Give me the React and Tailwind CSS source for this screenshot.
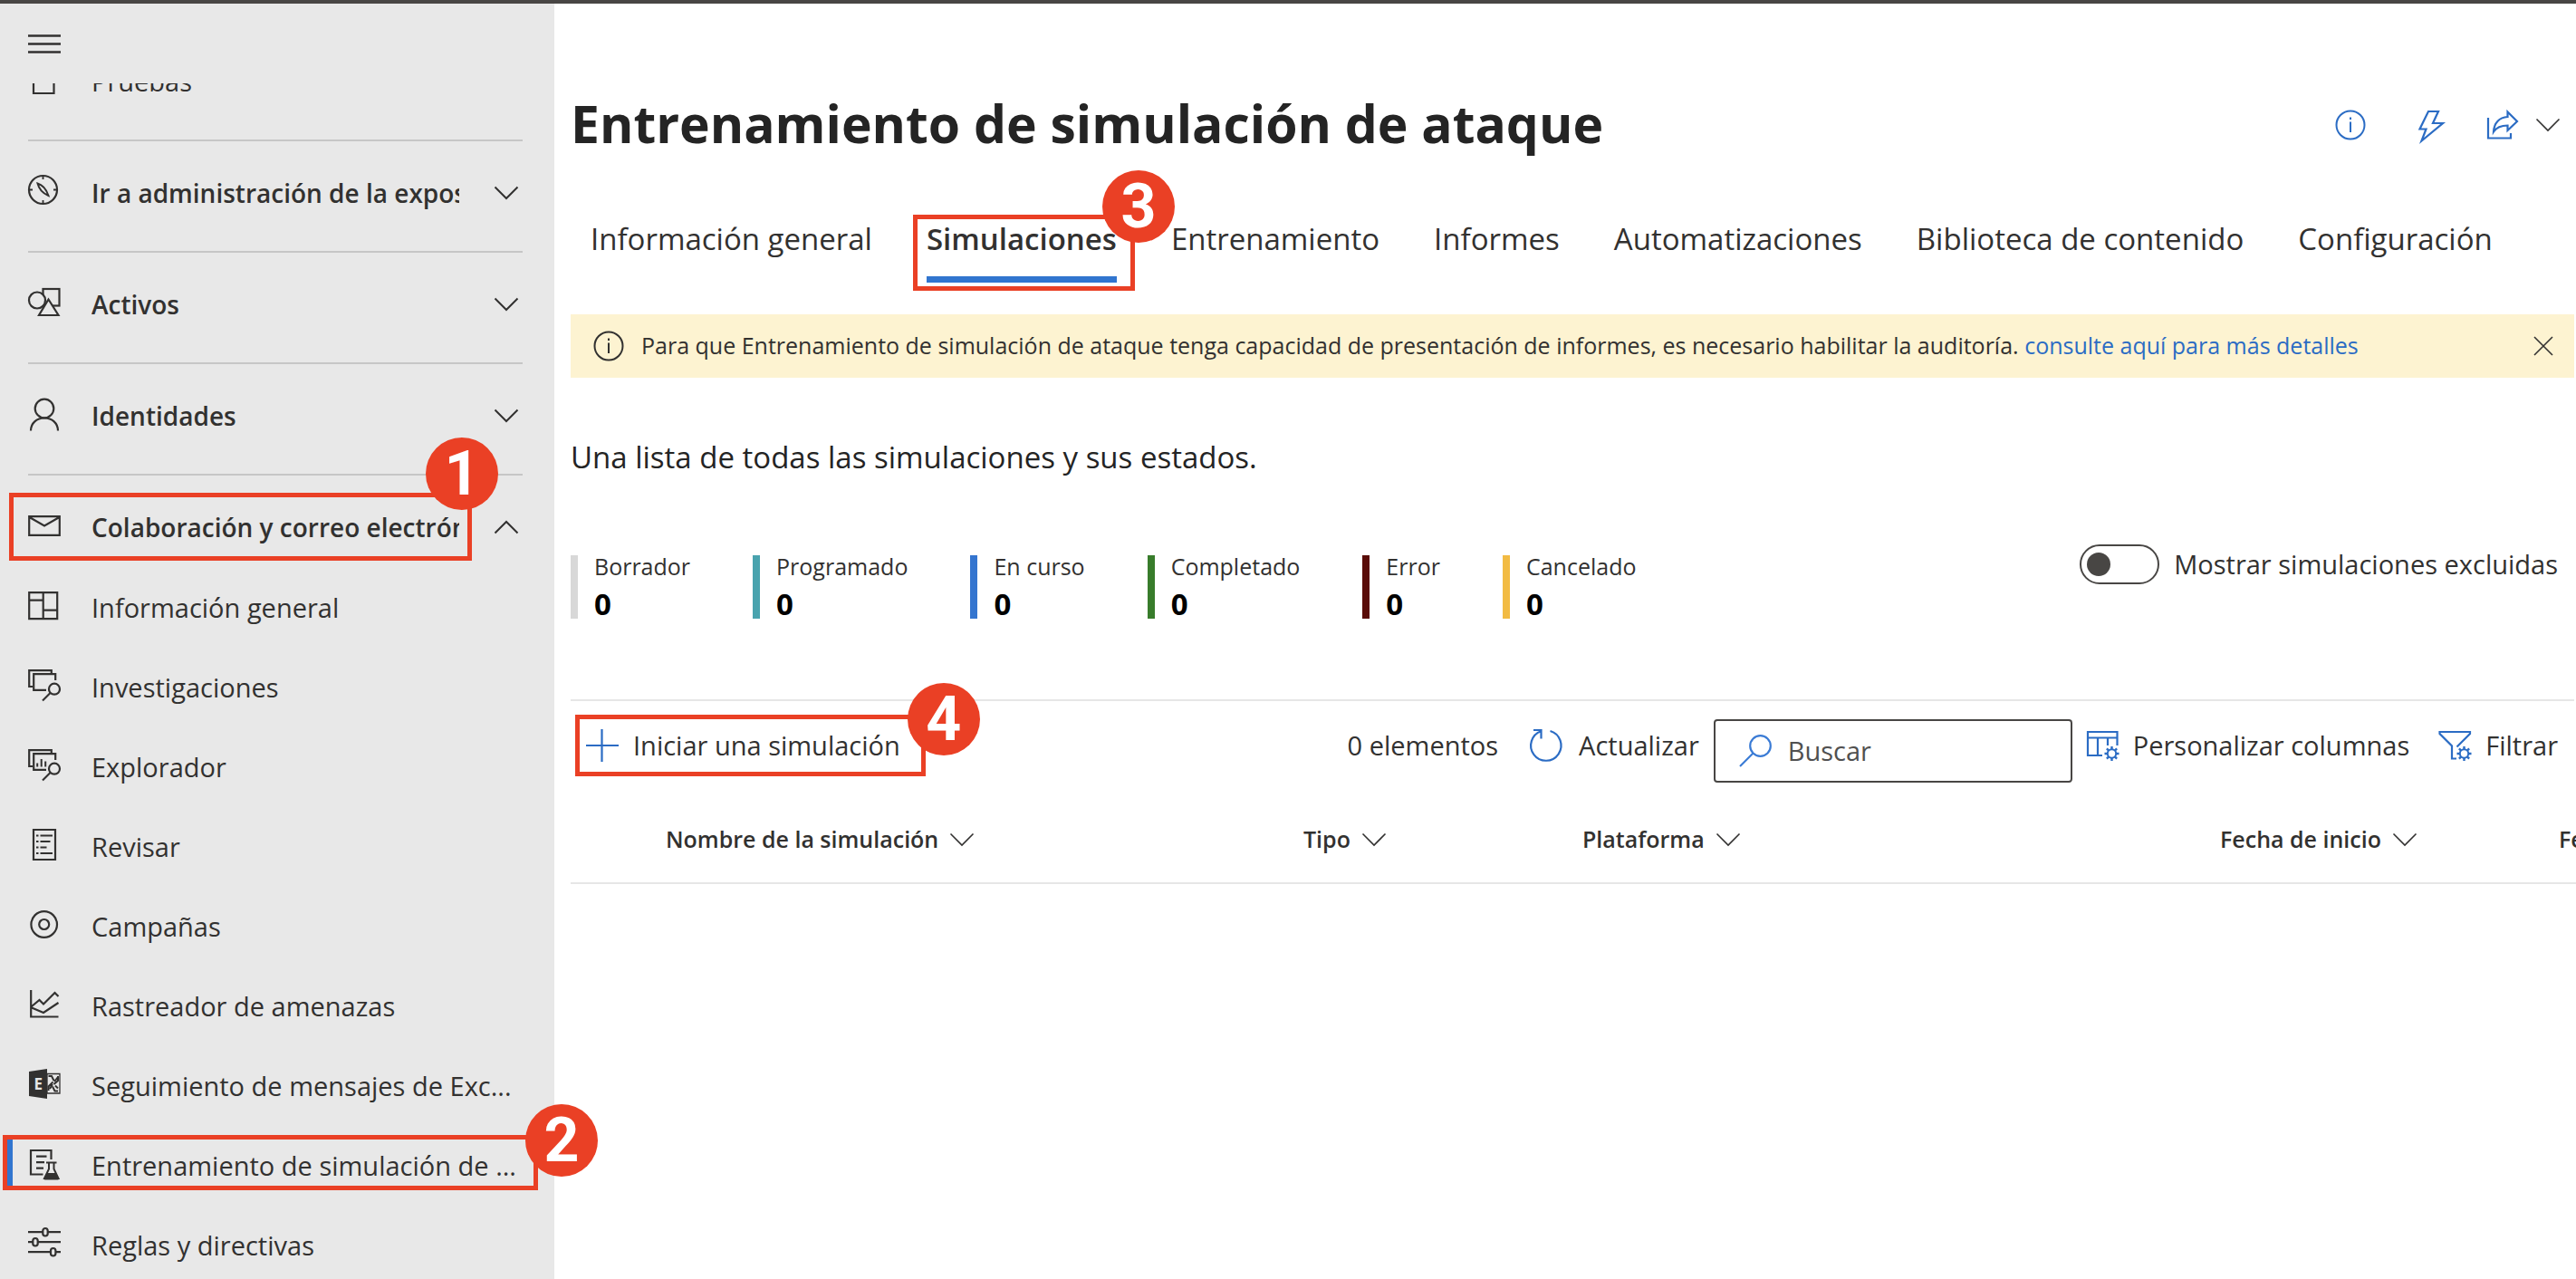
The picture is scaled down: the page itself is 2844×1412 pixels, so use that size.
import React from "react";

function Glyph({ children }) {
  return (
    <svg
      viewBox="0 0 36 40"
      className="h-10 w-9 shrink-0 overflow-visible"
      fill="none"
      stroke="#323130"
      strokeWidth="2.2"
      aria-hidden="true"
    >
      {children}
    </svg>
  );
}

const CaseIcon = () => (
  <Glyph>
    <path d="M12 7V3h10v4M6 7h22.500v26H6z" />
  </Glyph>
);
const CompassIcon = () => (
  <Glyph>
    <circle cx="16.500" cy="16.500" r="15.500" />
    <path d="M16.500 1v4M16.500 28v4M1 16.500h4M28 16.500h4" strokeWidth="1.800" />
    <path d="M10.500 9.500c5 1.500 9.500 6 12 13.500c-6-2.500-10.500-7.500-12-13.500z" strokeWidth="2" />
  </Glyph>
);
const ShapesIcon = () => (
  <Glyph>
    <rect x="16.500" y="3" width="18" height="18.500" />
    <circle cx="10" cy="15.500" r="9" fill="#e8e8e8" />
    <path d="M22.500 14.500L12 32h21.500z" fill="#e8e8e8" />
  </Glyph>
);
const PersonIcon = () => (
  <Glyph>
    <circle cx="18" cy="12" r="10.300" />
    <path d="M3 36.500C3 28 9.500 22.500 18 22.500S33 28 33 36.500" />
  </Glyph>
);
const MailIcon = () => (
  <Glyph>
    <path d="M1.200 8.200h33.600v20.600H1.200zM1.500 9l16.500 9.500L34.500 9" />
  </Glyph>
);
const BoardIcon = () => (
  <Glyph>
    <path d="M1.200 3.200h31v29h-31zM16.700 3v29M1 11.700h15.700M16.700 22.700H32" />
  </Glyph>
);
const StackSearch = ({ children }) => (
  <Glyph>
    <path d="M5 19H1.200V1.200h24.600V5M30.200 12V5.200H6.200v17.600H20" />
    <circle cx="29" cy="21.700" r="6" />
    <path d="M24.500 26L16 34.500" />
    {children}
  </Glyph>
);
const InvestigationsIcon = () => <StackSearch />;
const ExplorerIcon = () => (
  <StackSearch>
    <path d="M10.200 19.500v-4M14.700 19.500V11M19.200 19.500v-6" strokeWidth="2" />
  </StackSearch>
);
const ReviewIcon = () => (
  <Glyph>
    <path d="M6 1h24v33H6z" />
    <path
      d="M9 7.500h2.500M13.500 7.500h13.500M9 14h2.500M13.500 14h11M9 20.500h2.500M13.500 20.500h7M9 27h2.500M13.500 27h13.500"
      strokeWidth="1.900"
    />
  </Glyph>
);
const TargetIcon = () => (
  <Glyph>
    <circle cx="17.700" cy="17.500" r="14.300" />
    <circle cx="17.700" cy="17.500" r="5.500" />
  </Glyph>
);
const TrendIcon = () => (
  <Glyph>
    <path d="M3.200 2v29.500H33.500M4 20l8.500-7 4.500 4.500L29.500 5l4 4M4 21.500L17 27l16.500-11" />
  </Glyph>
);
const ExchangeIcon = () => (
  <Glyph>
    <path d="M21 6.500h14v21.500H21z" strokeWidth="1.300" />
    <path
      d="M22.500 9h3.500l2.500 5M33 9v5l-4.500 4M33 25.500h-3.500l-2.500-5M22.500 25v-4.500l5-5M29 15l4-5M30 19.500l3 3M27 18l-3 5"
      strokeWidth="2"
    />
    <path d="M1 4l20-3v33L1 31z" fill="#323130" stroke="none" />
    <text
      x="6.500"
      y="23.500"
      fontSize="17"
      fontWeight="700"
      fill="#e8e8e8"
      stroke="none"
      fontFamily="Open Sans, sans-serif"
    >
      E
    </text>
  </Glyph>
);
const TrainingIcon = () => (
  <Glyph>
    <path d="M25.500 13V3H3v26.500h13.500M9 9.700h11.500M9 16.200h9M9 22.700h8" />
    <path d="M20 16.500h11.500M23 17v6.500L18 34h15.500L28.500 23.500V17" strokeWidth="2" />
    <path d="M20.500 28h10.500l3 5.500c.5 1-.2 2-1.200 2H18.700c-1 0-1.700-1-1.200-2z" fill="#323130" stroke="none" />
  </Glyph>
);
const SlidersIcon = () => (
  <Glyph>
    <path d="M0 5.200h16M22 5.200h14M0 16.200h5M11 16.200h25M0 27.200h24.500M30.500 27.200H36" />
    <rect x="16.300" y="1" width="5.400" height="8.500" rx="2.700" />
    <rect x="5.300" y="12" width="5.400" height="8.500" rx="2.700" />
    <rect x="25" y="23" width="5.400" height="8.500" rx="2.700" />
  </Glyph>
);

function Chevron({ up = false, weight = 2 }) {
  return (
    <svg viewBox="0 0 28 16" className="h-4 w-7 shrink-0" fill="none" stroke="#323130" strokeWidth={weight} aria-hidden="true">
      <path d={up ? "M1.500 14.500L14 2l12.500 12.500" : "M1.500 1.500L14 14 26.500 1.500"} />
    </svg>
  );
}

function BlueIcon({ children }) {
  return (
    <svg viewBox="0 0 36 36" className="size-9 shrink-0 overflow-visible" fill="none" stroke="#2b6cc4" strokeWidth="2.200" aria-hidden="true">
      {children}
    </svg>
  );
}

const Gear = () => (
  <g>
    <circle cx="28.500" cy="27" r="4.700" strokeWidth="2" />
    <path
      d="M28.500 22.500v-3.500M28.500 31.500V35M24 27h-3.500M33 27h3.500M25.300 23.800l-2.400-2.400M31.700 30.200l2.400 2.400M31.700 23.800l2.400-2.400M25.300 30.200l-2.400 2.400"
      strokeWidth="2.400"
    />
  </g>
);

function InfoCircle({ color }) {
  return (
    <svg viewBox="0 0 36 36" className="size-9 shrink-0" fill="none" stroke={color} strokeWidth="2" aria-hidden="true">
      <circle cx="18" cy="18" r="15.500" />
      <path d="M18 14.500V26M18 9.500v2.500" />
    </svg>
  );
}

/* Numbered call-out: a red frame with a round step marker on its corner. */
function Callout({ step, box, badge }) {
  return (
    <span className={"pointer-events-none absolute z-20 border-[5px] border-[#ea4025] " + box}>
      <span
        className={
          "absolute flex size-20 items-center justify-center rounded-full bg-[#ea4025] font-['Roboto',sans-serif] text-[68px] leading-none font-bold text-white " +
          badge
        }
      >
        {step}
      </span>
    </span>
  );
}

const groups = [
  { label: "Ir a administración de la exposición", Icon: CompassIcon },
  { label: "Activos", Icon: ShapesIcon },
  { label: "Identidades", Icon: PersonIcon },
  { label: "Colaboración y correo electrónico", Icon: MailIcon, open: true },
];

const items = [
  { label: "Información general", Icon: BoardIcon },
  { label: "Investigaciones", Icon: InvestigationsIcon },
  { label: "Explorador", Icon: ExplorerIcon },
  { label: "Revisar", Icon: ReviewIcon },
  { label: "Campañas", Icon: TargetIcon },
  { label: "Rastreador de amenazas", Icon: TrendIcon },
  { label: "Seguimiento de mensajes de Exc...", Icon: ExchangeIcon },
  { label: "Entrenamiento de simulación de ...", Icon: TrainingIcon, current: true },
  { label: "Reglas y directivas", Icon: SlidersIcon },
];

function NavItem({ label, Icon, current }) {
  return (
    <li className="relative">
      {current && <span className="absolute top-[15px] left-[7px] h-[51px] w-[7px] bg-[#3175cf]" />}
      <a href="#" className="flex h-[88px] items-center gap-[34px] pl-[31px] whitespace-nowrap">
        <Icon />
        {label}
      </a>
      {current && <Callout step="2" box="top-[10px] left-[3px] h-[61px] w-[591px]" badge="-top-[39px] -right-[71px]" />}
    </li>
  );
}

function NavGroup({ label, Icon, open }) {
  return (
    <li className={"mr-[35px] ml-[31px] border-t-2 border-[#c6c6c6] pt-[37px] " + (open ? "pb-[25px]" : "pb-11")}>
      <button type="button" aria-expanded={!!open} className="relative flex h-10 w-full items-center gap-[34px] pr-1 text-left text-[28px] font-semibold">
        <Icon />
        <span className="mr-1 flex-1 overflow-hidden leading-10 whitespace-nowrap">{label}</span>
        <Chevron up={open} />
        {open && <Callout step="1" box="-top-[18px] -left-[21px] h-[75px] w-[511px]" badge="-top-[66px] -right-[34px]" />}
      </button>
    </li>
  );
}

const tabs = ["Información general", "Simulaciones", "Entrenamiento", "Informes", "Automatizaciones", "Biblioteca de contenido", "Configuración"];

const stats = [
  { label: "Borrador", bar: "bg-[#d8d8d8]" },
  { label: "Programado", bar: "bg-[#49a3ae]" },
  { label: "En curso", bar: "bg-[#3475cf]" },
  { label: "Completado", bar: "bg-[#387c2b]" },
  { label: "Error", bar: "bg-[#5a0c08]" },
  { label: "Cancelado", bar: "bg-[#f2bb43]" },
];

const columns = [
  { label: "Nombre de la simulación", width: "w-[704px]" },
  { label: "Tipo", width: "w-[308px]" },
  { label: "Plataforma", width: "w-[704px]" },
  { label: "Fecha de inicio", width: "w-[374px]" },
  { label: "Fecha de finalización", width: "w-[374px]" },
];

export default function App() {
  return (
    <div className="flex h-screen flex-col overflow-hidden border-t-4 border-[#484644] bg-white font-['Open_Sans','Noto_Sans',sans-serif] text-[29px] text-[#323130]">
      <div className="flex min-h-0 flex-1">
        <aside className="relative z-10 flex w-[612px] shrink-0 flex-col bg-[#e8e8e8]">
          <div className="flex h-[88px] shrink-0 items-center pl-[31px]">
            <button type="button" aria-label="Menú" className="flex h-6 w-9 items-center">
              <svg viewBox="0 0 36 24" className="h-6 w-9" stroke="#323130" strokeWidth="2.400" aria-hidden="true">
                <path d="M0 3.500h36M0 12.500h36M0 21.500h36" />
              </svg>
            </button>
          </div>
          <nav className="min-h-0 flex-1 overflow-y-clip">
            <ul className="-mt-[46px]">
              <li className="mb-5">
                <ul>
                  <NavItem label="Pruebas" Icon={CaseIcon} />
                </ul>
              </li>
              {groups.map((g) => (
                <NavGroup key={g.label} {...g} />
              ))}
              {items.map((i) => (
                <NavItem key={i.label} {...i} />
              ))}
            </ul>
          </nav>
        </aside>

        <main className="min-w-0 flex-1 overflow-hidden pt-[94px] pl-[18px]">
          <header className="flex h-[76px] items-center justify-between pr-[17px]">
            <h1 className="text-[57px] leading-none font-bold text-[#242424]">Entrenamiento de simulación de ataque</h1>
            <div className="flex items-center pt-1">
              <button type="button" aria-label="Información" className="mr-[54px]">
                <InfoCircle color="#2b6cc4" />
              </button>
              <button type="button" aria-label="Acciones rápidas" className="mr-[42px]">
                <BlueIcon>
                  <path d="M14 3h11l-6 13h11L6.500 35.500l5-13H4.500z" />
                </BlueIcon>
              </button>
              <button type="button" aria-label="Compartir" className="flex items-center gap-[18px]">
                <BlueIcon>
                  <path d="M2 10v22.500h25V27" />
                  <path d="M23.500 3.500L34 14 23.500 24v-5.500C16 18.500 11 21 8 25.500 8.500 15.500 14.500 9.500 23.500 9z" />
                </BlueIcon>
                <Chevron weight={1.6} />
              </button>
            </div>
          </header>

          <div role="tablist" className="mt-[70px] flex gap-[60px] pl-[22px] text-[33px] leading-10 whitespace-nowrap">
            {tabs.map((t) =>
              t === "Simulaciones" ? (
                <button key={t} type="button" role="tab" aria-selected="true" className="relative border-b-[7px] border-[#3175cf] pb-[21px] font-semibold">
                  {t}
                  <Callout step="3" box="-top-[7px] -right-5 -left-[15px] h-[84px]" badge="-top-[54px] -right-[49px]" />
                </button>
              ) : (
                <button key={t} type="button" role="tab" aria-selected="false" className="pb-7">
                  {t}
                </button>
              ),
            )}
          </div>

          <div className="mt-[35px] mr-0.5 flex h-[70px] items-center bg-[#fdf3d1] pr-[22px] pl-6 text-[25px] whitespace-nowrap">
            <InfoCircle color="#323130" />
            <p className="ml-[18px] flex-1">
              Para que Entrenamiento de simulación de ataque tenga capacidad de presentación de informes, es necesario habilitar la auditoría.{" "}
              <a href="#" className="text-[#2b6cc4]">
                consulte aquí para más detalles
              </a>
            </p>
            <button type="button" aria-label="Cerrar">
              <svg viewBox="0 0 24 24" className="size-6" stroke="#323130" strokeWidth="1.600" aria-hidden="true">
                <path d="M2 2l20 20M22 2L2 22" />
              </svg>
            </button>
          </div>

          <p className="mt-[68px] text-[33px] leading-10 text-[#242424]">Una lista de todas las simulaciones y sus estados.</p>

          <div className="mt-[76px] flex items-start justify-between pr-5">
            <dl className="mt-[5px] flex gap-[69px]">
              {stats.map((s) => (
                <div key={s.label} className="flex items-center gap-[18px]">
                  <span className={"h-[70px] w-2 " + s.bar} />
                  <div>
                    <dt className="text-[25px] leading-[38px]">{s.label}</dt>
                    <dd className="text-[33px] leading-[46px] font-bold text-black">0</dd>
                  </div>
                </div>
              ))}
            </dl>
            <label className="flex h-11 items-center gap-4">
              <input
                type="checkbox"
                role="switch"
                className="flex h-11 w-[88px] appearance-none items-center rounded-full border-2 border-[#484644] pl-1.5 before:size-[26px] before:rounded-full before:bg-[#484644]"
              />
              Mostrar simulaciones excluidas
            </label>
          </div>

          <div className="mt-[82px] mr-0.5 flex items-start justify-between border-t-2 border-[#e6e6e6] pt-5 pr-[18px] whitespace-nowrap">
            <button type="button" className="relative ml-[17px] flex h-[58px] items-center gap-4">
              <BlueIcon>
                <path d="M17.500 0v36M0 18h36" />
              </BlueIcon>
              Iniciar una simulación
              <Callout step="4" box="-top-[5px] -right-7 -left-3 h-[68px]" badge="-top-10 -right-[65px]" />
            </button>
            <div className="flex items-start">
              <span className="mr-[35px] flex h-[58px] items-center">0 elementos</span>
              <button type="button" className="mr-4 flex h-[58px] items-center gap-[18px]">
                <BlueIcon>
                  <path d="M22.500 2A16.700 16.700 0 1 1 12.500 2.200M4 1h8.500v9.500" />
                </BlueIcon>
                Actualizar
              </button>
              <label className="mr-[15px] flex h-[70px] w-[396px] items-center gap-[18px] rounded border-2 border-[#484644] px-[26px]">
                <svg viewBox="0 0 36 36" className="size-9 shrink-0" fill="none" stroke="#3a7bd5" strokeWidth="2.200" aria-hidden="true">
                  <circle cx="23.500" cy="12.500" r="11.300" />
                  <path d="M15.500 20.500L1 35" />
                </svg>
                <input type="text" aria-label="Buscar" placeholder="Buscar" className="min-w-0 flex-1 outline-none placeholder:text-[#505050]" />
              </label>
              <button type="button" className="mr-8 flex h-[58px] items-center gap-4">
                <BlueIcon>
                  <path d="M18 29H2V3h32.500v15M2 9.500h32.500M13 9.500V29M24 9.500V18" />
                  <Gear />
                </BlueIcon>
                Personalizar columnas
              </button>
              <button type="button" className="flex h-[58px] items-center gap-4">
                <BlueIcon>
                  <path d="M20 32.500h-5v-14L1.500 5V3H35v2L20.500 19.500" />
                  <Gear />
                </BlueIcon>
                Filtrar
              </button>
            </div>
          </div>

          <div className="mt-[15px] overflow-hidden">
            <table className="w-max table-fixed border-b-2 border-[#e6e6e6] text-left text-[25px]">
              <thead>
                <tr className="h-24">
                  <td className="w-[105px] min-w-[105px]" />
                  {columns.map((c) => (
                    <th key={c.label} scope="col" className="p-0 font-semibold">
                      <button type="button" className={"flex items-center gap-3 whitespace-nowrap " + c.width}>
                        {c.label}
                        <Chevron weight={1.6} />
                      </button>
                    </th>
                  ))}
                </tr>
              </thead>
            </table>
          </div>
        </main>
      </div>
    </div>
  );
}
